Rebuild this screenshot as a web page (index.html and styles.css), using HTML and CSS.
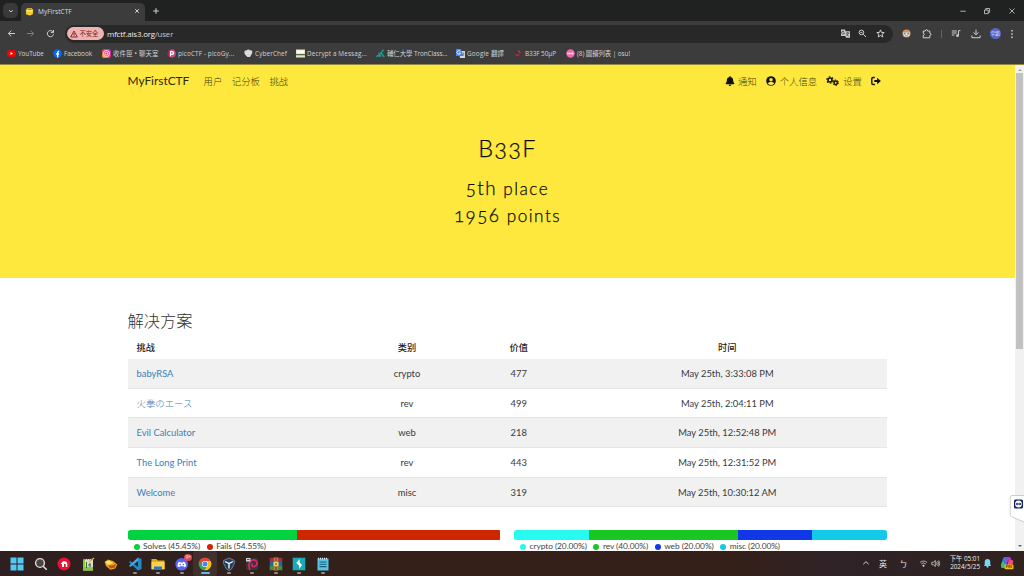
FILE: index.html
```html
<!DOCTYPE html>
<html lang="zh-CN">
<head>
<meta charset="utf-8">
<title>MyFirstCTF</title>
<link rel="stylesheet" href="styles.css">
</head>
<body>
<header class="chrome">
  <div class="tabstrip">
    <div class="tabsearch"><svg width="6" height="6" viewBox="0 0 6 6"><path class="line" d="M1.2 2.2 3 4 4.8 2.2"/></svg></div>
    <div class="tab">
      <svg width="9" height="9" viewBox="0 0 9 9"><path fill="#f4cf25" d="M.8 3 2.500.9h4L8.200 3 7.800 7.200 5 8.400 1.200 7.500z"/><path fill="#5b4712" d="M3 1.800h3.200l.5.800H2.500z"/><path fill="#fff3a0" d="M1.300 3.200h6.200L7 4.200H2z"/></svg>
      <span class="tabtitle">MyFirstCTF</span>
      <svg width="6" height="6" viewBox="0 0 6 6"><path class="line" d="m1.2 1.2 3.6 3.6m0-3.6L1.2 4.8"/></svg>
    </div>
    <svg class="newtab" width="8" height="8" viewBox="0 0 8 8"><path class="line" d="M4 1.2v5.6M1.2 4h5.6"/></svg>
    <div class="wincontrols">
      <svg width="8" height="8" viewBox="0 0 8 8"><path class="line thin" d="M1.3 4.2h5.5"/></svg>
      <svg width="8" height="8" viewBox="0 0 8 8"><path class="line thin" d="M1.5 3h3.7v3.7H1.5zM2.8 3V1.5h3.8v3.8H5.2"/></svg>
      <svg width="8" height="8" viewBox="0 0 8 8"><path class="line thin" d="m1.5 1.5 5 5m0-5-5 5"/></svg>
    </div>
  </div>
  <div class="toolbar">
    <div class="navbtns">
      <svg width="9" height="9" viewBox="0 0 9 9"><path class="line" d="M8 4.5H1.5M4.3 1.6 1.4 4.5l2.9 2.9"/></svg>
      <svg class="dim" width="9" height="9" viewBox="0 0 9 9"><path class="line" d="M1 4.5h6.5M4.7 1.6l2.9 2.9-2.9 2.9"/></svg>
      <svg width="9" height="9" viewBox="0 0 9 9"><path class="line" d="M7.2 3.2A3.1 3.1 0 1 0 7.5 5.3M7.5 1v2.6H4.9"/></svg>
    </div>
    <div class="omnibox">
      <span class="insecure"><svg width="8" height="8" viewBox="0 0 8 8"><path fill="none" stroke="#7a2020" stroke-width=".9" d="M4 1 7.3 7H.7zM4 3v2M4 5.4v.8"/></svg>不安全</span>
      <span class="url">mfctf.ais3.org<i>/user</i></span>
      <span class="omniicons">
        <svg width="9" height="9" viewBox="0 0 9 9"><path fill="#c7c7c7" d="M0 .5h4l.7 1.8H9v6.4H5L4.3 7H0z"/><path fill="none" stroke="#333" stroke-width=".7" d="M3.1 2.8A1.4 1.4 0 1 0 3.4 4H2.2M5.2 4h3M6.7 3.3V4M5.5 6.9 7.7 4M5.4 5l2.2 2"/></svg>
        <svg width="9" height="9" viewBox="0 0 9 9"><circle class="line" cx="3.4" cy="3.4" r="2.3"/><path class="line" d="M5.2 5.2 8 8M2.4 3.4h2"/></svg>
        <svg width="9" height="9" viewBox="0 0 9 9"><path class="line" d="m4.5.9 1 2.5 2.7.2-2.1 1.7.7 2.7-2.3-1.5L2.2 8l.7-2.7L.8 3.6l2.7-.2z"/></svg>
      </span>
    </div>
    <div class="actions">
      <svg width="9" height="9" viewBox="0 0 9 9"><circle cx="4.5" cy="4.5" r="4" fill="#d89260"/><path fill="#ece9e0" d="M.8 3.6h7.4L7.2 7 4.5 8 1.8 7z"/><circle cx="2.7" cy="4.7" r="1.1" fill="#5f9da7"/><circle cx="6.3" cy="4.7" r="1.1" fill="#5f9da7"/><path d="M3.2 6.8h2.6" stroke="#a44838" stroke-width=".7"/></svg>
      <svg class="puzzle" width="10" height="10" viewBox="0 0 10 10"><path class="line" d="M1.2 2h2.2c0-1.8 2.2-1.8 2.2 0h2.2v2.3c1.7 0 1.7 2.1 0 2.1v2.4H1.2V6.5c1.5 0 1.5-2.3 0-2.3z"/></svg>
      <i class="divider"></i>
      <svg width="10" height="10" viewBox="0 0 10 10"><path class="line" d="M.8 2h5M.8 4h5M.8 6h2.6M7.5 6.6V1.6h1.9"/><circle cx="6.5" cy="6.7" r="1.4" fill="#c7c7c7"/></svg>
      <svg width="10" height="10" viewBox="0 0 10 10"><path class="line" d="M5 .6v5M2.6 3.4 5 5.8l2.4-2.4M.9 6.4v2.3h8.2V6.4"/></svg>
      <span class="avatar">宇凱</span>
      <svg width="4" height="10" viewBox="0 0 4 10"><path fill="#d0d0d0" d="M1.2 1h1.5v1.5H1.2zm0 3.2h1.5v1.5H1.2zm0 3.2h1.5v1.5H1.2z"/></svg>
    </div>
  </div>
  <nav class="bookmarks">
    <span class="bm w46"><svg viewBox="0 0 9 9"><rect y="1.3" x=".2" width="8.6" height="6.4" rx="1.8" fill="#f00"/><path fill="#fff" d="m3.5 3 2.6 1.5L3.5 6z"/></svg>YouTube</span>
    <span class="bm w49"><svg viewBox="0 0 9 9"><circle cx="4.5" cy="4.5" r="4.2" fill="#0866ff"/><path fill="none" stroke="#fff" stroke-width="1.3" d="M4.7 8.6V3.7c0-1 .5-1.3 1.5-1.2M3.1 5h2.9"/></svg>Facebook</span>
    <span class="bm w65 cjk"><svg viewBox="0 0 9 9"><defs><linearGradient id="ig" x2="1" y1="1" y2="0"><stop stop-color="#ffbd35"/><stop offset=".5" stop-color="#f12e64"/><stop offset="1" stop-color="#9137dc"/></linearGradient></defs><rect width="9" height="9" rx="2" fill="url(#ig)"/><rect x="1.8" y="1.8" width="5.4" height="5.4" rx="1.5" fill="none" stroke="#fff" stroke-width=".9"/><circle cx="4.5" cy="4.5" r="1.3" fill="none" stroke="#fff" stroke-width=".8"/></svg>收件匣 • 聊天室</span>
    <span class="bm w77 wide"><svg viewBox="0 0 9 9"><circle cx="4.5" cy="4.5" r="4.3" fill="#b41c4c"/><path fill="#e8b7c8" d="M4.5.2a4.3 4.3 0 0 1 0 8.6z" opacity=".35"/><path fill="none" stroke="#fff" stroke-width="1.3" d="M3.5 7.5v-5h1.3c2.3 0 2.3 2.8 0 2.8H3.5"/></svg>picoCTF - picoGy...</span>
    <span class="bm w52 wide"><svg viewBox="0 0 9 9"><path fill="#d9dcda" d="M1 5.4C-.5 3 1.2.8 2.6 1.5c1-1.6 3-1.3 3.5-.1C8.3.8 9 3 7.7 5L6 8H3.3z"/></svg>CyberChef</span>
    <span class="bm w80 wide"><svg viewBox="0 0 9 9"><path fill="#e9e4bb" d="M0 .5h9v8H0z"/><path fill="#4e704b" d="M0 5h9v1.3H0z"/><path fill="#fff" d="M1 1.5h7V4H1z"/></svg>Decrypt a Messag...</span>
    <span class="bm w80"><svg viewBox="0 0 9 9"><path fill="none" stroke="#11a69a" stroke-width="1.3" d="M.4 7.7C4 6 5 3.5 7.6.7M2.3 4l3 3.7M5.2 4l3 4M1 7.2h3"/></svg>輔仁大學 TronClass...</span>
    <span class="bm w58 cjk"><svg viewBox="0 0 9 9"><path fill="#d4d8dc" d="M3 2h6v7H4z"/><path fill="#4285f4" d="M0 0h5l2 7H0z"/><path fill="none" stroke="#fff" stroke-width=".8" d="M4.3 2.5A1.8 1.8 0 1 0 4.5 4H3"/><path stroke="#52606b" stroke-width=".6" d="M5.9 4h2.4M7.7 4 6 7M6.4 5l1.7 2"/></svg>Google 翻譯</span>
    <span class="bm w52"><svg viewBox="0 0 9 9"><path fill="none" stroke="#cf2438" stroke-width="1.2" d="M1.5 5.3 3.5 6.8 5.500 5.200M5 3.500h1.800"/><circle cx="5" cy="2.200" r=".7" fill="#ef5264"/></svg>B33F 50µP</span>
    <span class="bm"><svg viewBox="0 0 9 9"><circle cx="4.5" cy="4.5" r="4.2" fill="#f269a8"/><path stroke="#fff" stroke-width="1.5" stroke-dasharray="1.2 .3" d="M1.4 4.5h6.3"/></svg>(8) 圖譜列表 | osu!</span>
  </nav>
</header>

<div class="viewport">
  <div class="page">
    <section class="hero">
      <nav class="sitenav">
        <a class="brand">MyFirstCTF</a>
        <a class="n1">用户</a><a class="n2">记分板</a><a>挑战</a>
        <div class="account">
          <svg width="10" height="10" viewBox="0 0 448 512"><path d="M224 512c35 0 64-29 64-64H160c0 35 29 64 64 64zm215-150c-19-20-55-52-55-154 0-78-54-140-128-155V32a32 32 0 0 0-64 0v21C118 68 64 130 64 208c0 102-36 134-55 154-6 6-9 14-9 22 0 16 13 32 32 32h384c19 0 32-16 32-32 0-8-3-16-9-22z"/></svg><a class="a1">通知</a>
          <svg width="10" height="10" viewBox="0 0 10 10"><circle cx="5" cy="5" r="4.8"/><circle cx="5" cy="3.8" r="1.8" fill="#ffe83d"/><path fill="#ffe83d" d="M2 7.8c.3-1.6 1.4-1.8 3-1.8s2.7.2 3 1.8A4.2 4.2 0 0 1 2 7.8"/></svg><a class="a2">个人信息</a>
          <svg width="13" height="10" viewBox="0 0 13 10"><g fill="none" stroke="#111"><circle cx="4" cy="4" r="2" stroke-width="1.6"/><circle cx="4" cy="4" r="3.2" stroke-width="1.1" stroke-dasharray="1.7 1.65"/><circle cx="9.7" cy="6.7" r="1.7" stroke-width="1.5"/><circle cx="9.7" cy="6.7" r="2.8" stroke-width="1" stroke-dasharray="1.5 1.43"/></g></svg><a class="a3">设置</a>
          <svg width="10" height="10" viewBox="0 0 10 10"><path fill="none" stroke="#111" stroke-width="1.4" d="M3.8 1.5H2.1Q.8 1.5.8 2.8v4.4Q.8 8.5 2.1 8.5h1.7"/><path d="M3.3 4h2.8V1.7L9.9 5 6.1 8.3V6H3.3z"/></svg>
        </div>
      </nav>
      <h1>B33F</h1>
      <h2 class="place"><span>5th</span> place</h2>
      <h2 class="points"><span>1956</span> points</h2>
    </section>
    <main class="container">
      <h3>解决方案</h3>
      <table>
        <thead><tr><th class="c1">挑战</th><th class="c2">类别</th><th class="c3">价值</th><th class="c4">时间</th></tr></thead>
        <tbody>
          <tr><td><a>babyRSA</a></td><td>crypto</td><td>477</td><td>May 25th, 3:33:08 PM</td></tr>
          <tr><td><a class="thin-link">火拳のエース</a></td><td>rev</td><td>499</td><td>May 25th, 2:04:11 PM</td></tr>
          <tr><td><a>Evil Calculator</a></td><td>web</td><td>218</td><td>May 25th, 12:52:48 PM</td></tr>
          <tr><td><a>The Long Print</a></td><td>rev</td><td>443</td><td>May 25th, 12:31:52 PM</td></tr>
          <tr><td><a>Welcome</a></td><td>misc</td><td>319</td><td>May 25th, 10:30:12 AM</td></tr>
        </tbody>
      </table>
      <div class="stats">
        <div class="stat">
          <div class="bar"><i class="green" style="width:45.45%"></i><i class="red" style="width:54.55%"></i></div>
          <div class="legend"><span><b class="green"></b>Solves (45.45%)</span><span><b class="red"></b>Fails (54.55%)</span></div>
        </div>
        <div class="stat">
          <div class="bar"><i class="cyan" style="width:20%"></i><i class="leaf" style="width:40%"></i><i class="blue" style="width:20%"></i><i class="sky" style="width:20%"></i></div>
          <div class="legend"><span><b class="cyan"></b>crypto (20.00%)</span><span><b class="leaf"></b>rev (40.00%)</span><span><b class="blue"></b>web (20.00%)</span><span><b class="sky"></b>misc (20.00%)</span></div>
        </div>
      </div>
    </main>
  </div>
  <div class="scrollbar"><i class="up"></i><i class="thumb"></i><i class="down"></i></div>
  <svg class="sidewidget" width="15" height="28" viewBox="0 0 15 28"><path fill="#fff" stroke="#b9b9b9" stroke-width=".7" d="M15 .5H3Q1.200.5 1.200 3v16.500q0 1.500 1.300 2.200L15 27"/><rect x="5" y="4.500" width="9" height="9" rx="1.500" fill="#12205f"/><circle cx="9.500" cy="9" r="3.400" fill="#fff"/><path fill="#12205f" d="m6.500 9 1.900-1.400v.8h2.200v-.8L12.500 9l-1.900 1.400v-.8H8.400v.8z"/></svg>
</div>

<footer class="taskbar">
  <div class="apps">
    <span><svg viewBox="0 0 14 14"><path fill="#54c8f4" d="M.5.5h6v6h-6zm7 0h6v6h-6zm-7 7h6v6h-6zm7 0h6v6h-6z"/></svg></span>
    <span><svg viewBox="0 0 14 14"><circle cx="6" cy="6" r="4.4" fill="#4b4544" stroke="#e0dddc" stroke-width="1.4"/><path stroke="#e0dddc" stroke-width="1.6" d="m9.2 9.2 3.5 3.6"/></svg></span>
    <span><svg viewBox="0 0 14 14"><circle cx="7" cy="7" r="6.5" fill="#eb1031"/><path fill="#fff" d="M3.500 7 6 4.300q4-.8 4.300 2.200V10H8.700V7H7v3H5V7z"/></svg></span>
    <span><svg viewBox="0 0 14 14"><path fill="#d9dfcf" d="M2 2h10v11.500H2z"/><path fill="#83c83e" d="M2 10h10v3.500H2zM2 2h2v9H2z"/><path fill="none" stroke="#426635" d="M5.500 5v6M7 8h3M9 6v4"/><path stroke="#e7b33e" stroke-width="1.500" d="m8 5 5-4"/><path stroke="#444" stroke-dasharray="1 1" d="M2 2h9"/></svg></span>
    <span><svg viewBox="0 0 14 14"><path fill="#e8a621" d="M.7 5 4 2.500 9 4l4.300 3.500-2 4-5 1.300L2 9z"/><path fill="#ffe36e" d="M1 5 5 3.500 9 6 4.500 8z"/><path fill="#c64c1b" d="m4 8.500 5-.2 3-1.500-1 3.800-4.500 1z"/></svg></span>
    <span><svg viewBox="0 0 14 14"><path fill="#2489ca" d="M10 .5 13.500 2v10L10 13.500 1 5.300 2.200 4 10 10z"/><path fill="#42aef0" d="M10 .5v3.600L2.200 10 1 8.800z"/></svg><u></u></span>
    <span><svg viewBox="0 0 14 14"><path fill="#e6a51c" d="M.5 2h4.800l1.400 1.500h6.800v9H.5z"/><path fill="#ffd34d" d="M.5 5h13v7H.5z"/><path fill="#2578cb" d="M3 9.500h8v3H3z"/></svg><u></u></span>
    <span class="badged"><svg viewBox="0 0 14 14"><circle cx="6.700" cy="7.300" r="6.300" fill="#5865f2"/><path fill="#fff" d="M3.200 5.500 5 4.700l.6.700h2.200l.6-.7 1.800.8 1 3.800-1.800 1-.8-1H5l-.8 1-1.900-1z"/><g fill="#5865f2"><circle cx="5.200" cy="7.600" r=".8"/><circle cx="8.300" cy="7.600" r=".8"/></g></svg><em>9+</em><u></u></span>
    <span class="active"><svg viewBox="0 0 14 14"><circle cx="7" cy="7" r="6.300" fill="#36a852"/><path fill="#e94335" d="M1.500 4A6.300 6.300 0 0 1 12.500 4H7L4 8.500z"/><path fill="#fbbd09" d="M7 4h5.500a6.300 6.300 0 0 1-6 9.300L9.700 8z"/><circle cx="7" cy="7" r="3.100" fill="#fff"/><circle cx="7" cy="7" r="2.500" fill="#4285f4"/></svg><u></u></span>
    <span><svg viewBox="0 0 14 14"><path fill="#203d5d" stroke="#8fa8bb" stroke-width=".7" d="m7 1 5.400 2.500v3L9.500 12 7 13.500 4.500 12 1.600 6.500v-3z"/><path fill="none" stroke="#fff" stroke-width="1.300" d="m3 4.500 4 2 4-2M7 6.500v5"/></svg><u></u></span>
    <span><svg viewBox="0 0 14 14"><path fill="#353638" d="M1 1h12v12H1z"/><path fill="none" stroke="#dc2766" stroke-width="1.700" d="M5 13C3 9 4 3.500 8 3s5.500 4.500 2.500 6S6 8.500 7.500 6.500"/><path fill="#d4d4d4" d="M1 1h4.500v3.500H1z"/><path stroke="#555" d="M2 2.500h2.500"/></svg><u></u></span>
    <span><svg viewBox="0 0 14 14"><path fill="#a52b48" d="M.7.800h12.600V5H.7z"/><path fill="#2761a8" d="M.7 5h12.600v4H.7z"/><path fill="#3c8f46" d="M.7 9h12.600v4.200H.7z"/><path fill="#bc8036" d="M4.800.500h4.500v13H4.800z"/><path fill="#ead073" d="M4.500 5h5v4h-5z"/><path stroke="#643f1c" d="M7 1v3m0 2v2m0 2v3"/></svg><u></u></span>
    <span><svg viewBox="0 0 14 14"><path fill="#16abb7" d="M.7.700h12.600v12.600H.7z"/><path fill="#fff" d="M7.600 2v3.600L10 8l-2.700 4V8.800L4.200 6z"/></svg><u></u></span>
    <span><svg viewBox="0 0 14 14"><path fill="#55c4e5" d="M1.500 1.500h11v12h-11z"/><path stroke="#17617b" stroke-width="1.100" d="M3.500 5h7m-7 2.300h7m-7 2.300h7"/><path stroke="#d1edf5" stroke-dasharray="1 1" stroke-width="1.500" d="M2 1.500h10"/></svg><u></u></span>
  </div>
  <div class="tray">
    <svg class="t1" width="8" height="8" viewBox="0 0 8 8"><path class="line" d="m1.300 5.200 2.700-2.500 2.700 2.500"/></svg>
    <span class="t2">英</span><span class="t3">ㄅ</span>
    <svg class="t4" width="9" height="9" viewBox="0 0 9 9"><path class="line thin" d="M.9 3.500a5.200 5.200 0 0 1 7.200 0M2.200 5a3.300 3.300 0 0 1 4.600 0"/><circle cx="4.500" cy="6.700" r="1" fill="#e5dfdf"/></svg>
    <svg class="t5" width="9" height="9" viewBox="0 0 9 9"><path class="line thin" d="M.8 3.300h1.500L4.300 1.500v6l-2-1.800H.8zM5.500 3.200q1 1.300 0 2.600M6.600 2.200q2 2.300 0 4.600M7.700 1.500q2 3 0 6"/></svg>
    <div class="clock"><span>下午 05:01</span><span>2024/5/25</span></div>
    <svg class="t6" width="9" height="10" viewBox="0 0 9 10"><path fill="#75d6f6" d="M1.700 7V4Q1.700 1 4.500 1t2.800 3v3l1 1H.7z"/><circle cx="4.500" cy="8.700" r="1" fill="#75d6f6"/></svg>
    <svg width="14" height="14" viewBox="0 0 14 14"><path fill="#2389dc" d="M1 9 3.200 2Q4 1 5.500 1H9L6.500 10 5 12H2Q.5 12 1 9"/><path fill="#a63edb" d="M5.500 1h3.800q1.400 0 1.800 1.800l.3 1.200H8L6.200 9z"/><path fill="#ed4a87" d="M8.500 4h3Q14 4 13 7l-2 5H7z"/><path fill="#3dbd73" d="m1 8 2-3 2 4-1 3H2z"/><rect x="4.500" y="8.500" width="9" height="4.800" rx="1" fill="#f8b912"/><text x="9" y="12.400" text-anchor="middle" class="pre">PRE</text></svg>
  </div>
</footer>
</body>
</html>
```
FILE: styles.css
```css
* { box-sizing: border-box; }
body { margin: 0; width: 1024px; height: 576px; overflow: hidden; display: flex; flex-direction: column; background: #fff; font-family: Lato, "Noto Sans CJK SC", sans-serif; }
svg { display: block; flex: none; }
.line { fill: none; stroke: #d0d0d0; stroke-width: 1; }
.thin { stroke-width: .8; }
i, em { font-style: normal; }
u { text-decoration: none; }

.chrome { height: 65px; flex: none; background: #3c3c3c; color: #ddd; font-family: "Open Sans", "Noto Sans CJK TC", sans-serif; border-bottom: 1px solid #92893f; }
.tabstrip { height: 21px; background: #202221; display: flex; align-items: center; padding-left: 3px; }
.tabsearch { width: 15px; height: 15px; border-radius: 5px; background: #383938; display: flex; align-items: center; justify-content: center; }
.tab { align-self: flex-end; height: 18px; width: 124px; margin-left: 3px; padding: 0 5px 2px 4px; border-radius: 5px 5px 0 0; background: #3c3c3c; display: flex; align-items: center; }
.tabtitle { flex: 1; margin-left: 4px; font-size: 6.5px; letter-spacing: .05px; }
.newtab { margin-left: 7px; }
.wincontrols { margin-left: auto; display: flex; gap: 16.5px; padding-right: 8.5px; }
.toolbar { height: 22px; padding-top: 3px; display: flex; align-items: center; }
.navbtns { width: 65px; padding-left: 7px; display: flex; gap: 10.3px; }
.dim { opacity: .45; }
.omnibox { width: 828px; height: 18px; border-radius: 9px; background: #282828; display: flex; align-items: center; padding: 0 8.5px 0 1.5px; }
.insecure { width: 37px; height: 13px; border-radius: 7px; background: #efb4b2; color: #6e2725; font-size: 6.3px; display: flex; align-items: center; gap: 2px; padding-left: 3px; white-space: nowrap; }
.url { margin-left: 3.5px; font-size: 7.9px; letter-spacing: -.17px; color: #eee; }
.url i { color: #c4c4c4; }
.omniicons { margin-left: auto; display: flex; gap: 8.5px; }
.actions { flex: 1; display: flex; align-items: center; justify-content: space-between; padding: 0 10px 0 9px; }
.actions .puzzle { margin-left: 1.5px; }
.divider { width: 1px; height: 8px; background: #636363; }
.avatar { width: 11px; height: 11px; border-radius: 50%; background: #5968c8; color: #e0e4ff; font-size: 4.5px; line-height: 11px; text-align: center; }
.bookmarks { height: 21px; padding-left: 6.5px; display: flex; align-items: center; font-size: 6.4px; letter-spacing: -.06px; color: #d3d3d3; white-space: nowrap; }
.bm { display: flex; align-items: center; gap: 2.5px; }
.bm svg { width: 9px; height: 9px; }
.wide { letter-spacing: .12px; }
.cjk { letter-spacing: .18px; }
.w46 { width: 46px; } .w49 { width: 49px; } .w52 { width: 52px; } .w58 { width: 58px; }
.w65 { width: 65px; } .w77 { width: 77px; } .w80 { width: 80px; }

.viewport { height: 485.5px; flex: none; overflow: hidden; display: flex; position: relative; }
.page { width: 1015px; }
.hero { height: 213px; background: #ffe83d; color: #0a0a0a; text-align: center; }
.sitenav { height: 31px; padding: 0 134px 0 127.5px; display: flex; align-items: center; font-size: 9.4px; color: #443e14; font-weight: 300; }
.brand { width: 76px; text-align: left; font-size: 11.9px; font-weight: 400; color: #282510; }
.n1 { margin-right: 9.5px; } .n2 { margin-right: 9.5px; }
.account { margin-left: auto; display: flex; align-items: center; fill: #111; }
.a1 { margin: 0 9px 0 3px; } .a2 { margin: 0 9px 0 4px; } .a3 { margin: 0 9px 0 4px; }
h1, h2, h3 { margin: 0; font-weight: 400; }
.hero h1 { margin-top: 38px; font-size: 23.5px; font-weight: 300; line-height: 28px; letter-spacing: 1.3px; font-feature-settings: "onum"; -webkit-text-stroke: .25px #0a0a0a; }
.hero h2 { height: 27px; font-size: 17.2px; font-weight: 300; line-height: 27px; letter-spacing: 1.5px; font-feature-settings: "onum"; -webkit-text-stroke: .25px #0a0a0a; }
.hero h2 span { font-size: 18.8px; line-height: 1; }
.place { margin-top: 12.5px; }
.container { width: 759.5px; margin-left: 127.5px; padding-top: 28.5px; }
.container h3 { font-family: "Noto Sans CJK SC", sans-serif; font-weight: 300; font-size: 16.3px; line-height: 26px; color: #333; }
table { width: 100%; table-layout: fixed; border-collapse: separate; border-spacing: 0; font-size: 9.4px; color: #373a3c; text-align: center; margin-top: 2px; }
th, td { padding: 0; }
th { height: 24.5px; font-size: 9.2px; font-weight: 500; color: #222; }
.c1 { width: 216.5px; } .c2 { width: 126px; } .c3 { width: 97.5px; }
td { height: 29.7px; line-height: 12px; padding-top: 1px; border-bottom: 1px solid #e5e5e5; }
th:first-child, td:first-child { text-align: left; padding-left: 9px; }
tbody tr:nth-child(odd) { background: #f1f1f1; }
td a { color: #4080b8; }
td .thin-link { font-weight: 300; line-height: 1; font-family: "Noto Sans CJK JP", sans-serif; }
.stats { display: grid; grid-template-columns: 373px 373px; gap: 13.5px; margin-top: 23px; }
.bar { height: 10px; border-radius: 2.5px; overflow: hidden; display: flex; }
.green { background: #00d33f; } .red { background: #cf2600; } .cyan { background: #27faee; }
.leaf { background: #18c721; } .blue { background: #1038e8; } .sky { background: #12c9e9; }
.legend { display: flex; gap: 6.5px; padding-left: 6px; margin-top: 1px; font-size: 8.4px; letter-spacing: -.07px; line-height: 11px; color: #444; white-space: nowrap; }
.legend span { display: flex; align-items: center; gap: 3.5px; }
.legend b { width: 6px; height: 6px; border-radius: 50%; }
.scrollbar { width: 9px; background: #f1f1f1; display: flex; flex-direction: column; align-items: center; }
.thumb { width: 7px; height: 276px; background: #c1c1c1; margin-top: 2px; }
.up { margin-top: 4px; border: 2px solid transparent; border-top: 0; border-bottom: 2.5px solid #a2a2a2; }
.down { margin: auto 0 4px; border: 2px solid transparent; border-bottom: 0; border-top: 2.5px solid #606060; }
.sidewidget { position: absolute; right: 0; top: 430px; }

.taskbar { flex: 1; display: flex; background: linear-gradient(90deg, #2e2021, #342019 38%, #342019 72%, #2f2228 82%, #30221f); color: #eee; font-family: "Open Sans", "Noto Sans CJK TC", sans-serif; }
.apps { display: flex; padding-left: 5.3px; }
.apps span { position: relative; width: 23.5px; display: flex; flex-direction: column; align-items: center; padding-top: 6px; }
.apps svg { width: 14px; height: 14px; }
.apps u { width: 4px; height: 2px; border-radius: 1px; background: #958c89; margin-top: 1px; }
.apps .active { background: #41312e; border-radius: 3px; }
.apps .active u { width: 9px; background: #60b9ed; }
.badged em { position: absolute; right: 1px; top: 3px; width: 8px; height: 7px; border-radius: 4px; background: #d94850; font-size: 4.5px; line-height: 7px; text-align: center; }
.tray { margin-left: auto; display: flex; align-items: center; padding-right: 10px; font-size: 8px; }
.t2 { margin-left: 9.5px; } .t3 { margin-left: 12.5px; } .t4 { margin-left: 11px; } .t5 { margin-left: 3.5px; }
.clock { width: 34px; margin-left: 6px; display: flex; flex-direction: column; align-items: flex-end; font-size: 6.3px; line-height: 8.5px; white-space: nowrap; }
.t6 { margin: 0 8px 0 3px; }
.pre { font: 700 3.5px "Open Sans", sans-serif; fill: #5e4300; }
```
